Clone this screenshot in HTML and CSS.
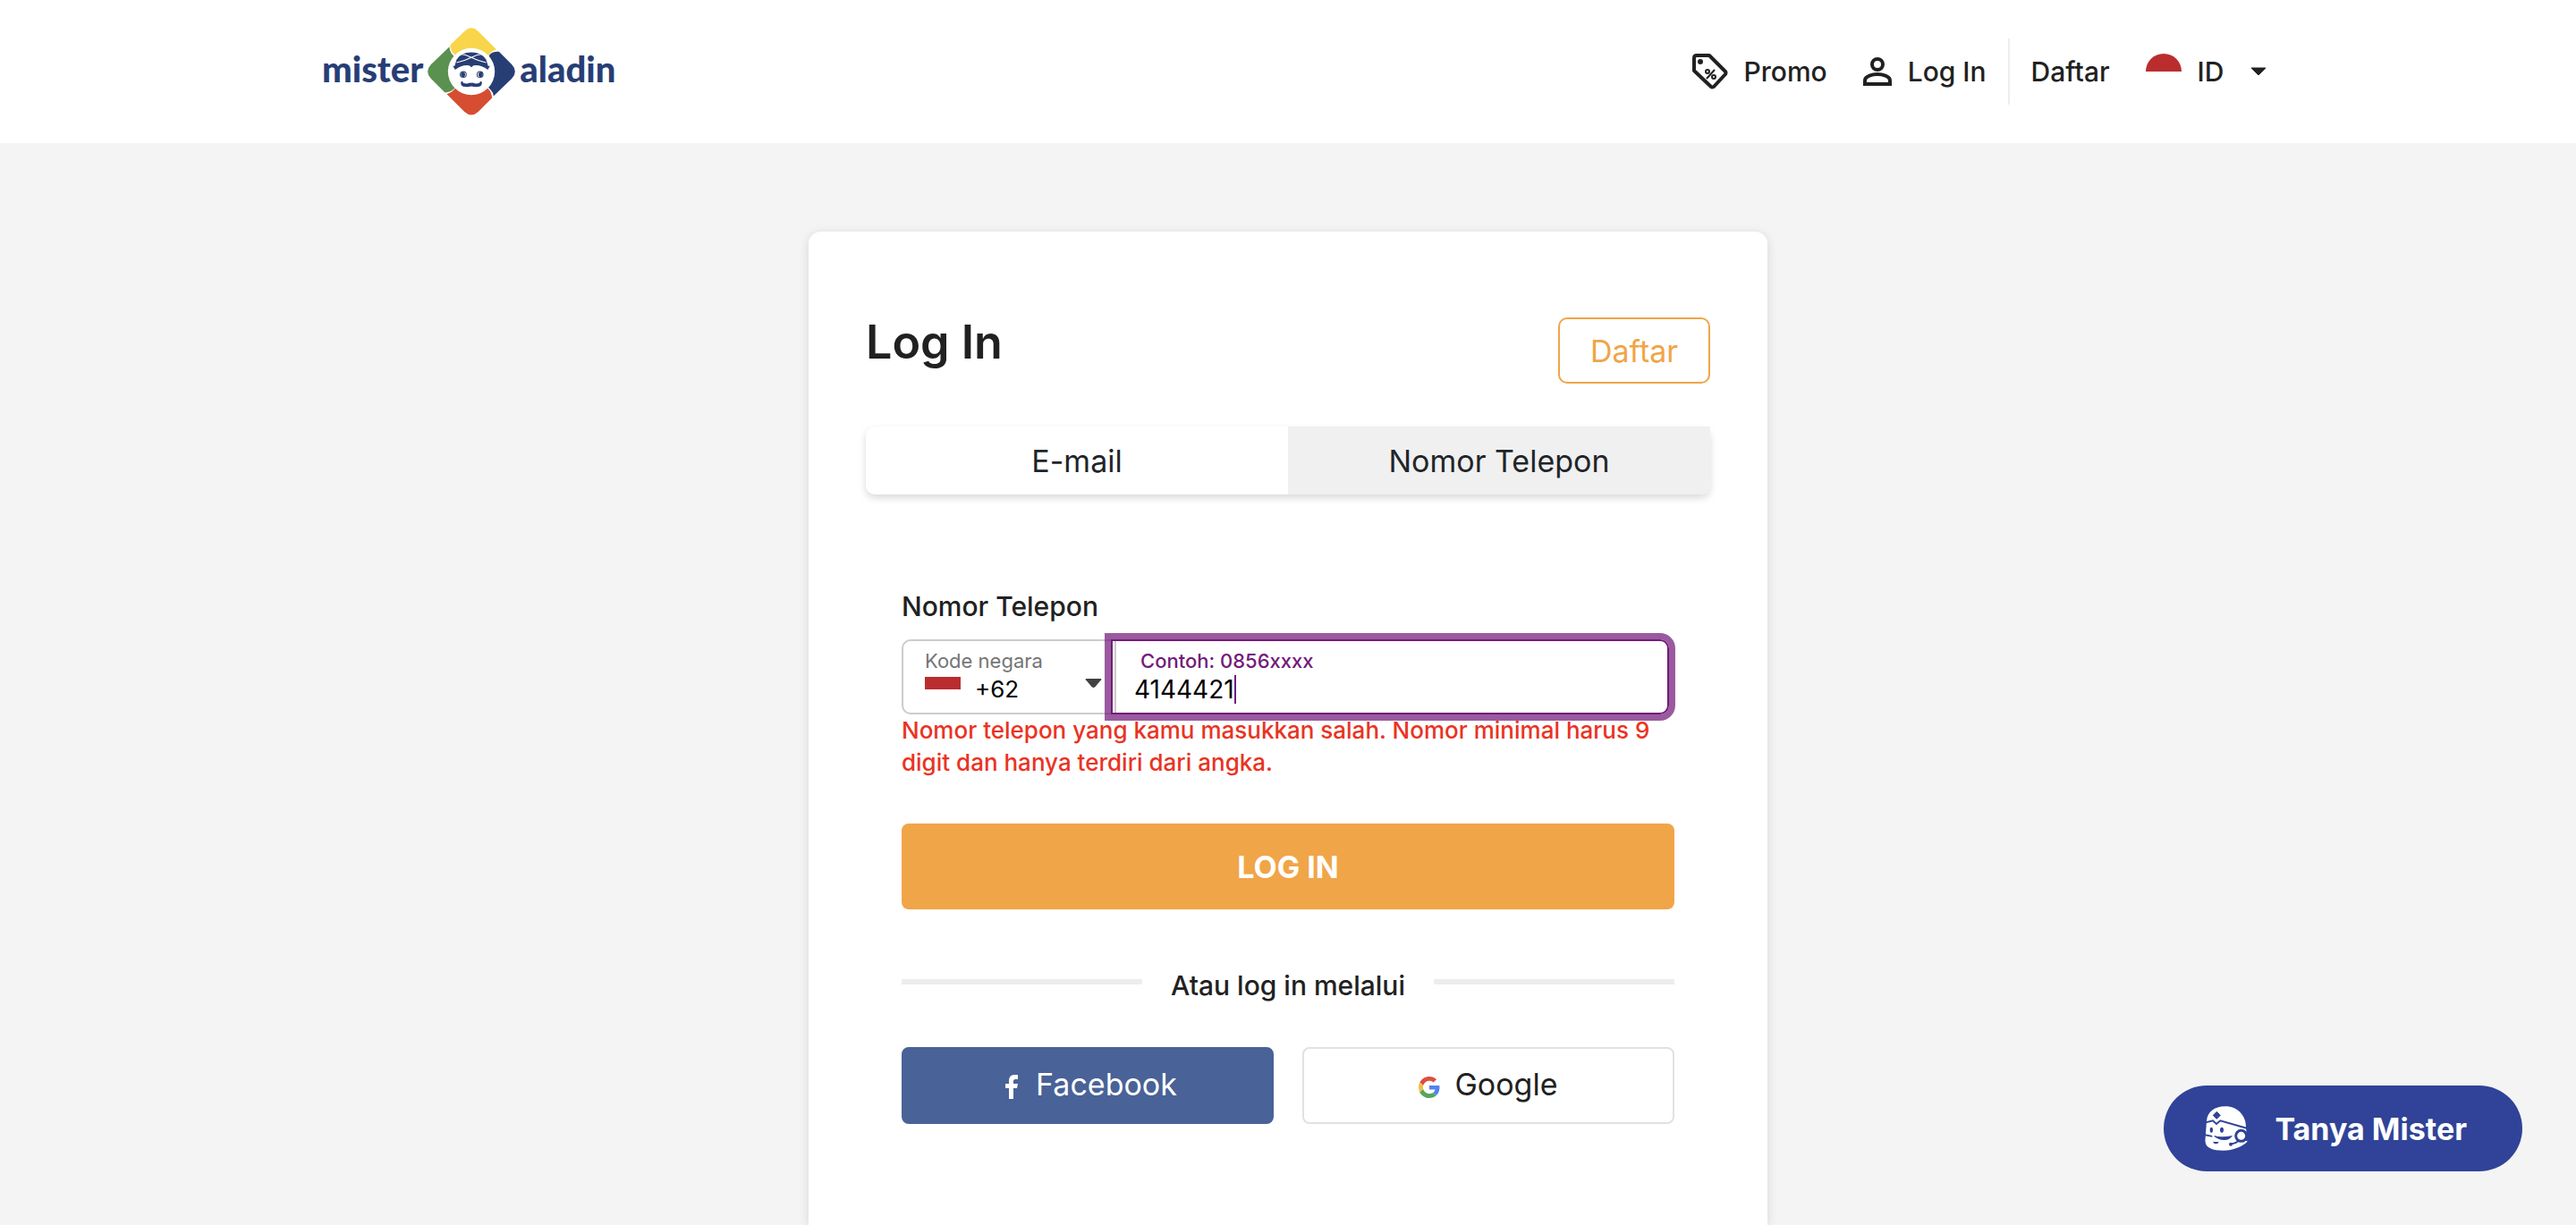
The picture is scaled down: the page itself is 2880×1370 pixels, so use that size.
FILE: index.html
```html
<!DOCTYPE html>
<html lang="id">
<head>
<meta charset="utf-8">
<meta name="viewport" content="width=device-width, initial-scale=1">
<title>Log In - Mister Aladin</title>
<link rel="stylesheet" href="styles.css">
</head>
<body>
<header class="topbar">
  <a class="logo" href="#">
    <span>mister</span>
    <svg class="logo-mark" viewBox="0 0 292 292" aria-hidden="true">
      <path fill="#f8d54a" d="M75 58 124 11Q146-9 168 11L230 73Q210 78 203 94L95 94Q78 82 75 58Z"/>
      <path fill="#273e75" d="M205 92Q216 78 238 80L281 123Q302 146 281 169L220 228Q219 214 203 200Z"/>
      <path fill="#d64d32" d="M64 221Q82 216 92 202L200 202Q214 214 215 234L169 280Q146 301 123 280Z"/>
      <path fill="#5a9150" d="M73 63Q74 84 90 96L92 200Q80 216 58 216L11 169Q-10 146 11 123Z"/>
      <circle cx="146" cy="146" r="78" fill="#fff"/>
      <path fill="#273e75" d="M92 140 84 127 90 128 97 106Q112 82 146 82 180 82 195 106L202 128 208 127 201 140Q176 122 153 126L146 132 139 126Q116 122 92 140Z"/>
      <path fill="none" stroke="#fff" stroke-width="3" d="M97 116Q120 112 146 99 172 87 183 89M195 116Q172 112 146 99 120 87 109 89"/>
      <g fill="none" stroke="#273e75" stroke-width="3"><circle cx="119" cy="156" r="10"/><circle cx="175" cy="156" r="10"/></g>
      <path fill="#273e75" d="M120 147a9 9 0 0 0 0 18l5-5v-8zM175 147a9 9 0 0 1 0 18l-5-5v-8z"/>
      <path fill="#273e75" d="M111 180q7-4 8 4 12 4 20 0 7-2 7 1 0-3 7-1 8 4 20 0 1-8 8-4 2 16-14 17-10 1-21-2-11 3-21 2-16-1-14-17z"/>
    </svg>
    <span>aladin</span>
  </a>
  <nav class="nav">
    <a class="nav-link" href="#">
      <svg class="nav-icon" viewBox="0 0 40 40" fill="none" stroke="#212121" stroke-width="4" stroke-linejoin="round" aria-hidden="true">
        <path d="M5 2H19L37 20Q38 21 37 23L24 37Q22 38 21 37L2 19V5Q2 2 5 2Z"/>
        <circle cx="9" cy="9" r="3" fill="#212121" stroke="none"/>
        <g stroke-width="2"><circle cx="17" cy="20" r="2"/><circle cx="24" cy="26" r="2"/><path d="M25 18 16 28"/></g>
      </svg>
      Promo
    </a>
    <a class="nav-link nav-login" href="#">
      <svg class="nav-person" viewBox="0 0 32 32" fill="none" stroke="#212121" stroke-width="4" aria-hidden="true">
        <circle cx="16" cy="8" r="6"/><path d="M2 30V26C2 21 11 19 16 19S30 21 30 26V30Z"/>
      </svg>
      Log In
    </a>
    <a class="nav-link nav-register" href="#">Daftar</a>
    <button class="nav-link nav-lang" type="button">
      <span class="flag-round"></span>
      ID
      <svg class="lang-caret" viewBox="0 0 18 10" aria-hidden="true"><path fill="#212121" d="M1 1H17L9 9Z" stroke="#212121" stroke-linejoin="round"/></svg>
    </button>
  </nav>
</header>

<main class="page">
  <section class="card">
    <div class="card-head">
      <h1>Log In</h1>
      <button class="register" type="button">Daftar</button>
    </div>
    <div class="tabs">
      <button class="tab" type="button">E-mail</button>
      <button class="tab tab-active" type="button">Nomor Telepon</button>
    </div>
    <form class="form">
      <label class="form-label" for="phone">Nomor Telepon</label>
      <div class="phone-row">
        <div class="code">
          <label class="field-label" for="code">Kode negara</label>
          <div class="code-value">
            <span class="flag"></span>
            <select id="code"><option>+62</option></select>
            <svg class="code-caret" viewBox="0 0 18 10" aria-hidden="true"><path fill="#424242" d="M1 0H17Q19 1 17 2L11 9Q9 11 7 9L1 2Q-1 1 1 0Z"/></svg>
          </div>
        </div>
        <div class="phone">
          <label class="field-label" for="phone">Contoh: 0856xxxx</label>
          <div class="phone-value"><input id="phone" type="tel" value="4144421" size="7"><span class="caret"></span></div>
        </div>
      </div>
      <p class="error">Nomor telepon yang kamu masukkan salah. Nomor minimal harus 9 digit dan hanya terdiri dari angka.</p>
      <button class="submit" type="submit">LOG IN</button>
      <div class="divider">Atau log in melalui</div>
      <div class="social">
        <button class="social-btn facebook" type="button">
          <svg class="fb-icon" viewBox="0 0 14 27" aria-hidden="true"><path fill="#fff" d="M4 27V15H0V10H4V7Q4 0 10 0H14V5H11Q9 5 9 7V10H14L13 15H9V27Z"/></svg>
          Facebook
        </button>
        <button class="social-btn google" type="button">
          <svg class="g-icon" viewBox="0 0 48 48" aria-hidden="true">
            <path fill="#d95040" d="M24 9.500c3.540 0 6.710 1.220 9.210 3.600l6.850-6.850C35.900 2.380 30.470 0 24 0 14.620 0 6.510 5.380 2.560 13.220l7.980 6.190C12.430 13.720 17.740 9.500 24 9.500z"/>
            <path fill="#5383ec" d="M46.980 24.550c0-1.570-.15-3.090-.38-4.550H24v9.020h12.940c-.58 2.960-2.260 5.480-4.780 7.180l7.730 6c4.510-4.180 7.090-10.360 7.090-17.650z"/>
            <path fill="#f2be42" d="M10.530 28.590c-.48-1.450-.76-2.990-.76-4.590s.27-3.140.76-4.590l-7.980-6.190C.92 16.460 0 20.120 0 24s.92 7.540 2.560 10.780z"/>
            <path fill="#58a55c" d="M24 48c6.480 0 11.930-2.130 15.890-5.810l-7.730-6c-2.150 1.450-4.920 2.300-8.160 2.300-6.260 0-11.570-4.220-13.470-9.910l-7.980 6.190C6.510 42.620 14.620 48 24 48z"/>
          </svg>
          Google
        </button>
      </div>
    </form>
  </section>
</main>

<button class="chat" type="button">
  <svg class="chat-icon" viewBox="0 0 142 150" aria-hidden="true">
    <path fill="#fff" d="M5 50C8 20 30 1 68 1C110 1 138 34 137 70L141 120C124 136 94 149 62 149C22 149-4 140 1 108Z"/>
    <g fill="none" stroke="#304398">
      <path stroke-width="6" d="M-2 56 26 49 38 60 51 49 142 75"/>
      <circle cx="121" cy="100" r="18" stroke-width="9"/>
      <path stroke-width="6" d="M112 116Q104 125 86 127M134 114 142 114"/>
    </g>
    <g fill="#304398">
      <path d="M39 19 51 31 39 43 27 31Z" stroke="#304398" stroke-width="3" stroke-linejoin="round"/>
      <ellipse cx="21" cy="80" rx="5" ry="9"/><ellipse cx="56" cy="80" rx="6" ry="9"/>
      <circle cx="86" cy="128" r="6"/>
      <path d="M0 94 24 99V104L0 100ZM31 99Q52 107 92 99 82 115 64 114 48 115 31 103ZM26 120H46Q44 127 36 127 29 127 26 120Z"/>
    </g>
  </svg>
  Tanya Mister
</button>
</body>
</html>
```

FILE: styles.css
```css
* {
  box-sizing: border-box;
}

body {
  margin: 0;
  min-height: 100vh;
  display: flex;
  flex-direction: column;
  background: #f4f4f4;
  color: #212121;
  font-family: Inter, "Liberation Sans", sans-serif;
}

button,
input,
select {
  font: inherit;
  color: inherit;
}

button {
  padding: 0;
  border: 0;
  background: none;
}

a {
  color: inherit;
  text-decoration: none;
}

/* Top bar */
.topbar {
  display: flex;
  align-items: center;
  justify-content: space-between;
  height: 160px;
  padding: 0 12% 0 12.5%;
  background: #fff;
}

.logo {
  display: flex;
  align-items: center;
  gap: 5px;
  color: #273e75;
  font-family: Lato, sans-serif;
  font-size: 40px;
  line-height: 56px;
  font-weight: 900;
}

.logo span {
  padding-bottom: 6px;
}

.logo-mark {
  width: 98px;
  height: 98px;
}

.nav {
  display: flex;
  align-items: center;
  font-size: 30px;
  line-height: 36px;
  font-weight: 500;
}

.nav-link {
  display: flex;
  align-items: center;
  gap: 18px;
}

.nav-icon {
  width: 40px;
  height: 40px;
}

.nav-login {
  height: 74px;
  margin-left: 40px;
  padding-right: 24px;
  border-right: 2px solid #ededed;
}

.nav-person {
  width: 32px;
  height: 32px;
}

.nav-register {
  margin-left: 24px;
}

.nav-lang {
  margin-left: 40px;
}

.flag-round {
  width: 40px;
  height: 40px;
  border-radius: 50%;
  background: linear-gradient(#ba2d2f 50%, #fff 50%);
}

.lang-caret {
  width: 18px;
  height: 10px;
  margin-left: 12px;
}

/* Card */
.page {
  flex: 1;
  display: flex;
  justify-content: center;
  padding-top: 99px;
}

.card {
  width: 1072px;
  padding: 96px 64px 64px;
  border-radius: 14px 14px 0 0;
  background: #fff;
  box-shadow: 0 2px 12px rgba(0, 0, 0, 0.12);
}

.card-head {
  display: flex;
  justify-content: space-between;
  align-items: flex-start;
}

h1 {
  margin: 0;
  font-size: 52px;
  line-height: 56px;
  font-weight: 600;
}

.register {
  width: 170px;
  height: 74px;
  border: 2px solid #f0a548;
  border-radius: 10px;
  color: #f0a548;
  font-size: 34px;
}

.tabs {
  display: flex;
  height: 76px;
  margin-top: 48px;
  border-radius: 10px;
  box-shadow: 0 4px 8px rgba(0, 0, 0, 0.15);
}

.tab {
  flex: 1;
  font-size: 34px;
  color: #212529;
}

.tab-active {
  border-radius: 0 0 10px 0;
  background: #f0f0f0;
}

/* Form */
.form {
  display: flex;
  flex-direction: column;
  padding: 107px 40px 0;
}

.form-label {
  font-size: 30px;
  line-height: 36px;
  font-weight: 500;
}

.phone-row {
  display: flex;
  height: 84px;
  margin-top: 19px;
  padding-right: 6px;
}

.code {
  width: 240px;
  padding: 8px 14px 0 24px;
  border: 2px solid #ccc;
  border-radius: 10px 0 0 10px;
}

.field-label {
  display: block;
  font-size: 22px;
  line-height: 28px;
  color: #757575;
}

.code-value {
  display: flex;
  align-items: flex-start;
  gap: 16px;
}

.flag {
  width: 40px;
  height: 28px;
  margin-top: 4px;
  background: linear-gradient(#ba2d2f 50%, #fff 50%);
}

select {
  flex: 1;
  height: 36px;
  padding: 0;
  border: 0;
  appearance: none;
  background: none;
  color: #000;
  font-size: 26px;
  line-height: 36px;
}

.code-caret {
  width: 19px;
  height: 10px;
  margin-top: 6px;
}

.phone {
  flex: 1;
  margin-left: -6px;
  padding: 8px 24px 0;
  border: 2px solid #731a7a;
  border-radius: 0 10px 10px 0;
  box-shadow: 0 0 0 7px rgba(115, 26, 122, 0.72);
}

.phone .field-label {
  padding-left: 7px;
  color: #731a7a;
  font-weight: 500;
}

.phone-value {
  display: flex;
  align-items: center;
}

input {
  field-sizing: content;
  height: 36px;
  padding: 0;
  border: 0;
  outline: 0;
  background: none;
  color: #000;
  font-size: 28px;
}

.caret {
  width: 2px;
  height: 32px;
  background: #731a7a;
}

/* Sits above the glow of the focused field */
.error {
  position: relative;
  margin: 0;
  color: #ea3323;
  font-size: 26px;
  line-height: 36px;
  font-weight: 500;
}

.submit {
  height: 96px;
  margin-top: 50px;
  border-radius: 8px;
  background: #f0a548;
  color: #fff;
  font-size: 34px;
  font-weight: 700;
}

.divider {
  display: flex;
  align-items: center;
  gap: 32px;
  margin-top: 67px;
  font-size: 30px;
  line-height: 36px;
  font-weight: 500;
}

.divider::before,
.divider::after {
  content: "";
  flex: 1;
  height: 6px;
  margin-bottom: 8px;
  background: #ededed;
}

.social {
  display: grid;
  grid-template-columns: 1fr 1fr;
  gap: 32px;
  margin-top: 51px;
}

.social-btn {
  display: flex;
  align-items: center;
  justify-content: center;
  gap: 16px;
  height: 86px;
  padding-bottom: 3px;
  border: 2px solid #dee2e6;
  border-radius: 8px;
  font-size: 34px;
}

.facebook {
  gap: 20px;
  padding-left: 8px;
  border-color: #496297;
  background: #496297;
  color: #fff;
}

.fb-icon {
  width: 14px;
  height: 27px;
  margin-top: 6px;
}

.g-icon {
  width: 24px;
  height: 24px;
  margin-top: 6px;
}

/* Chat launcher */
.chat {
  position: fixed;
  right: 60px;
  bottom: 60px;
  display: flex;
  align-items: center;
  gap: 30px;
  height: 96px;
  padding: 0 62px 0 46px;
  border-radius: 48px;
  background: #304398;
  color: #fff;
  font-size: 34px;
  font-weight: 700;
}

.chat-icon {
  width: 48px;
  height: 50px;
}
```
